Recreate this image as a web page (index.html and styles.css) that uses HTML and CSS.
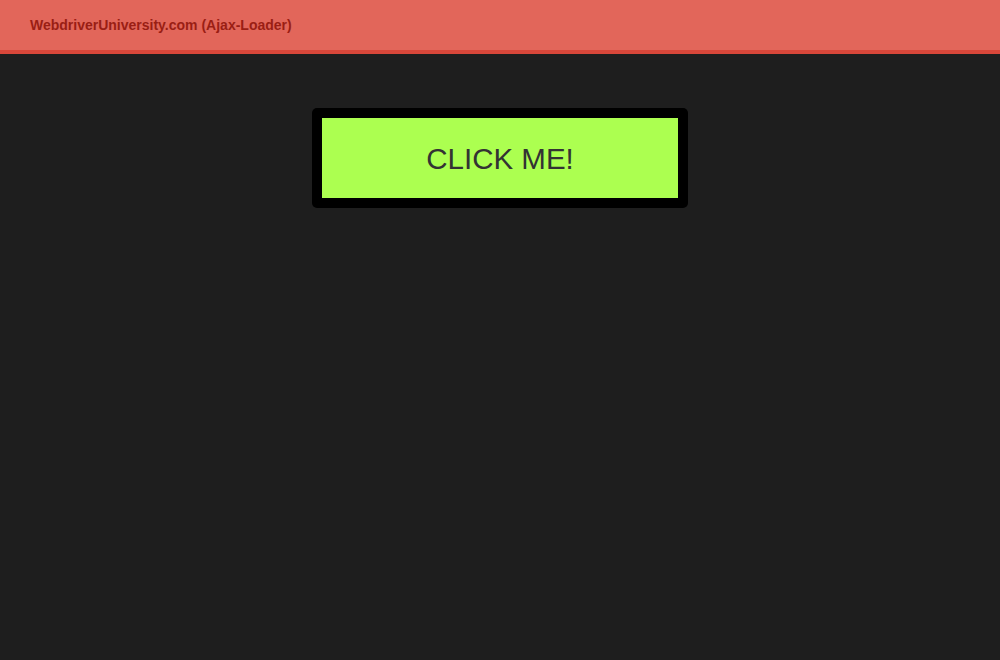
FILE: index.html
```html
<!DOCTYPE html>
<html>
<head>
<meta charset="utf-8">
<link rel="stylesheet" href="styles.css">
</head>
<body>
<header class="topbar">
  <span class="title">WebdriverUniversity.com (Ajax-Loader)</span>
</header>
<main class="content">
  <div class="btn-frame">
    <div class="btn">CLICK ME!</div>
  </div>
</main>
</body>
</html>
```
FILE: styles.css
```css
html, body {
  margin: 0;
  padding: 0;
  height: 100%;
  background: #1e1e1e;
  font-family: "Liberation Sans", Arial, sans-serif;
}
.topbar {
  height: 50px;
  background: #e2665a;
  border-bottom: 4px solid #d9473a;
  display: flex;
  align-items: center;
  padding-left: 30px;
}
.title {
  font-size: 14px;
  font-weight: bold;
  color: #9a1e14;
}
.content {
  display: flex;
  justify-content: center;
  padding-top: 54px;
}
.btn-frame {
  background: #000;
  padding: 10px;
  border-radius: 5px;
}
.btn {
  width: 356px;
  height: 80px;
  background: #acff50;
  color: #333;
  font-size: 29.5px;
  display: flex;
  align-items: center;
  justify-content: center;
  padding-top: 1px;
  box-sizing: border-box;
}
```
